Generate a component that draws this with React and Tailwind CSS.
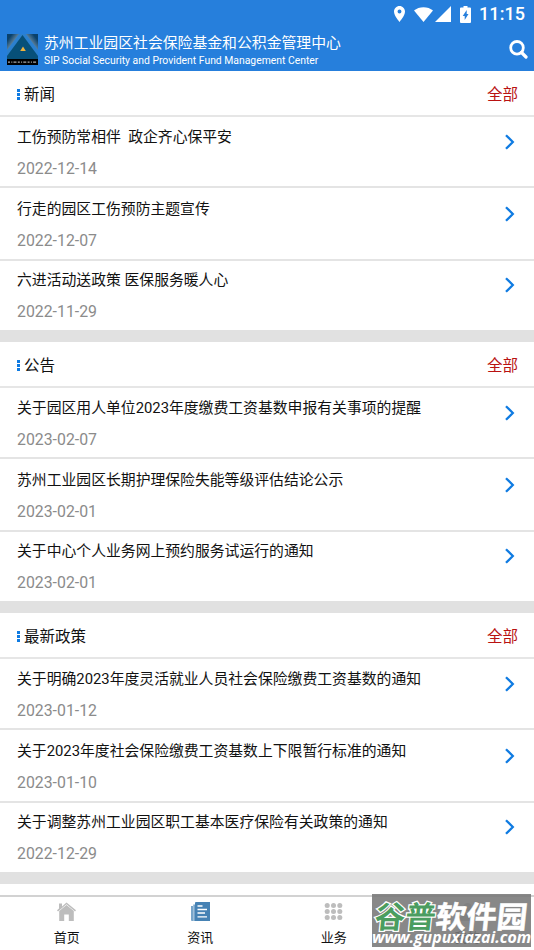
import clsx from 'clsx'

const SECTIONS = [
  {
    title: '新闻',
    items: [
      { title: '工伤预防常相伴  政企齐心保平安', date: '2022-12-14' },
      { title: '行走的园区工伤预防主题宣传', date: '2022-12-07' },
      { title: '六进活动送政策 医保服务暖人心', date: '2022-11-29' },
    ],
  },
  {
    title: '公告',
    items: [
      { title: '关于园区用人单位2023年度缴费工资基数申报有关事项的提醒', date: '2023-02-07' },
      { title: '苏州工业园区长期护理保险失能等级评估结论公示', date: '2023-02-01' },
      { title: '关于中心个人业务网上预约服务试运行的通知', date: '2023-02-01' },
    ],
  },
  {
    title: '最新政策',
    items: [
      { title: '关于明确2023年度灵活就业人员社会保险缴费工资基数的通知', date: '2023-01-12' },
      { title: '关于2023年度社会保险缴费工资基数上下限暂行标准的通知', date: '2023-01-10' },
      { title: '关于调整苏州工业园区职工基本医疗保险有关政策的通知', date: '2022-12-29' },
    ],
  },
]

const ROW_CLASSES = [
  'h-[71px] pt-[9px] border-b-2',
  'h-[73px] pt-[10px] border-b-2',
  'h-[69px] pt-[8px]',
]

const StatusBar = () => (
  <div className="flex h-7 items-center justify-end pr-[9px] text-white">
    <svg className="mr-[9px] h-4 w-[11px]" viewBox="5 2 14 20" fill="currentColor" preserveAspectRatio="none">
      <path d="M12 2C8.13 2 5 5.13 5 9c0 5.25 7 13 7 13s7-7.750 7-13c0-3.870-3.130-7-7-7zm0 9.500a2.500 2.500 0 1 1 0-5 2.500 2.500 0 0 1 0 5z" />
    </svg>
    <svg className="mr-0.5 h-[15px] w-[19px]" viewBox="0 0 19 15" fill="currentColor">
      <path d="M0 3.500C5 -1 14 -1 19 3.500L9.500 15z" />
    </svg>
    <svg className="mr-[9px] h-4 w-4" viewBox="0 0 16 16" fill="currentColor">
      <path d="M16 0v16H0z" />
    </svg>
    <svg className="mr-[8px] h-[17px] w-[11px]" viewBox="0 0 11 17">
      <path fill="currentColor" d="M3.500 0h4v1.500H10q1 0 1 1V16q0 1-1 1H1q-1 0-1-1V2.500q0-1 1-1h2.500z" />
      <path fill="#267fdc" d="M6.700 4L2.700 10h2v4L8.500 8H6.700z" />
    </svg>
    <span className="-mr-[1px] w-[47px] font-['Roboto',sans-serif] text-[18px] leading-none font-medium tracking-[0.1px]">11:15</span>
  </div>
)

const Logo = () => (
  <svg className="h-[31px] w-[31px] shrink-0" viewBox="0 0 31 31">
    <defs>
      <linearGradient id="edge" x1="0" y1="0" x2="0.6" y2="0.6">
        <stop offset="0.35" stopColor="#0a416b" />
        <stop offset="0.95" stopColor="#6b8ba2" />
      </linearGradient>
      <linearGradient id="edgeRight" x1="1" y1="0" x2="0.4" y2="0.6">
        <stop offset="0.35" stopColor="#0a416b" />
        <stop offset="0.95" stopColor="#6b8ba2" />
      </linearGradient>
    </defs>
    <path fill="#2b80cf" d="M0 0h31v26H0z" />
    <path fill="url(#edge)" d="M0 0h12L0 16z" />
    <path fill="url(#edgeRight)" d="M19 0h12v16z" />
    <path fill="#075079" d="M15.500 1L31 22v3H0v-3z" />
    <path fill="#f0b33d" d="M16 12.500L18.800 17H13.200z" />
    <path fill="#000" d="M0 25h31v6H0z" />
    <path stroke="#a9a9a9" strokeWidth="1.300" strokeDasharray="2 1.300 1 1.200 3 1.300" d="M1 28.200h29" />
  </svg>
)

const Header = () => (
  <header className="h-[71px] bg-[#267fdc] text-white">
    <StatusBar />
    <div className="flex h-[43px] pl-[7px]">
      <div className="pt-[6px]">
        <Logo />
      </div>
      <div className="ml-1.5 flex-1 pt-1 whitespace-nowrap">
        <h1 className="text-[14.85px] leading-[22px] font-normal">苏州工业园区社会保险基金和公积金管理中心</h1>
        <p className="mt-px text-[10.380px] leading-3">SIP Social Security and Provident Fund Management Center</p>
      </div>
      <svg className="mt-[12px] mr-[6px] h-[19px] w-[19px]" viewBox="0 0 19 19" fill="none" stroke="currentColor" strokeWidth="2.800">
        <circle cx="8" cy="7.800" r="6.300" />
        <path strokeWidth="3.200" strokeLinecap="round" d="M12.500 12.500L17 17" />
      </svg>
    </div>
  </header>
)

const NewsRow = ({ item, className }) => (
  <li className={clsx('flex border-[#e4e4e4] pl-[17px]', className)}>
    <div className="flex-1 whitespace-pre">
      <h3 className="text-[14.840px] leading-[22px] font-normal text-[#111]">{item.title}</h3>
      <p className="mt-[10px] text-[15.850px] leading-[22px] text-[#8b8b8b]">{item.date}</p>
    </div>
    <svg className="mt-[8px] mr-[19px] h-4 w-[10px]" viewBox="0 0 10 16" fill="none" stroke="#0f7be2" strokeWidth="2.300">
      <path d="M1 1.200L7.800 8 1 14.800" />
    </svg>
  </li>
)

const Section = ({ section }) => (
  <section className="border-b-12 border-[#e1e1e1] bg-white">
    <div className="flex h-[46px] items-center border-b-2 border-[#e6e6e6] pt-[3px] pr-4 pl-[17px] text-[15.500px] leading-[22px]">
      <span className="mr-1 flex flex-col gap-px">
        <i className="h-[3px] w-[3px] bg-[#0f7be2]" />
        <i className="h-[3px] w-[3px] bg-[#0f7be2]" />
        <i className="h-[3px] w-[3px] bg-[#0f7be2]" />
      </span>
      <h2 className="flex-1 font-normal text-[#111]">{section.title}</h2>
      <a className="text-[#b91212]">全部</a>
    </div>
    <ul>
      {section.items.map((item, i) => (
        <NewsRow key={item.title} item={item} className={ROW_CLASSES[i]} />
      ))}
    </ul>
  </section>
)

const HomeIcon = () => (
  <svg className="h-[19px] w-[19px]" viewBox="0 0 19 19" fill="#bdbdbd">
    <path d="M2 1.500h3v3l4.500-4L19 8.300l-1 1.200-8.500-7.200L1 9.500 0 8.300l2-1.700z" />
    <path d="M9.500 2.900L16.800 9V19h-5v-6.500H7.200V19H2.200V9z" />
  </svg>
)

const NewsIcon = () => (
  <svg className="h-[19px] w-[19px]" viewBox="0 0 19 19">
    <path fill="#4682b4" d="M4.500 0H19v19H4V1z" />
    <path fill="#78a5ca" d="M0 4h2v15H1q-1 0-1-1zM2.300 2.500H4V19H2.300z" />
    <path stroke="#fff" strokeWidth="1.300" d="M6.500 4h5M6.500 7.500H16M6.500 11h7.500M6.500 14.800H16" />
  </svg>
)

const GridIcon = () => (
  <svg className="h-[19px] w-[19px]" viewBox="0 0 19 19" fill="#bdbdbd">
    {[3.5, 9.5, 15.5].map((y) =>
      [3.2, 9.5, 15.8].map((x) => <circle key={`${x}-${y}`} cx={x} cy={y} r="2.500" />)
    )}
  </svg>
)

const UserIcon = () => (
  <svg className="h-[19px] w-[19px]" viewBox="0 0 19 19" fill="#bdbdbd">
    <circle cx="9.500" cy="5" r="4" />
    <path d="M1.500 19q0-8 8-8t8 8z" />
  </svg>
)

const TABS = [
  { label: '首页', Icon: HomeIcon },
  { label: '资讯', Icon: NewsIcon },
  { label: '业务', Icon: GridIcon },
  { label: '我的', Icon: UserIcon },
]

const TabBar = () => (
  <nav className="mt-[11px] grid h-[55px] grid-cols-4 border-t-2 border-[#d2d2d2] bg-white">
    {TABS.map(({ label, Icon }) => (
      <a key={label} className="flex flex-col items-center pt-[5px]">
        <Icon />
        <span className="mt-[8px] text-[13px] leading-[18px] text-[#111]">{label}</span>
      </a>
    ))}
  </nav>
)

const Watermark = () => (
  <div className="absolute top-[894px] left-[372px] h-[53px] w-[159px] bg-[#777777]/88 whitespace-nowrap">
    <div className="mt-[5px] ml-[3px] flex h-[32px] -skew-x-6 items-center font-['Noto_Sans_CJK_SC',sans-serif] text-[30.500px] leading-[32px] font-bold">
      <span className="text-[#4b9d60] [-webkit-text-stroke:2.500px_#fff] [paint-order:stroke_fill]">谷普</span>
      <span className="text-white [-webkit-text-stroke:0.500px_#fff]">软件园</span>
    </div>
    <div className="-mt-[3px] flex justify-center font-['Open_Sans',sans-serif] text-[15.900px] leading-[18px] font-bold text-white italic">
      www.gupuxiazai.com
    </div>
  </div>
)

export default function App() {
  return (
    <div className="relative h-[950px] w-[534px] overflow-hidden bg-white font-['Roboto','Noto_Sans_CJK_SC',sans-serif]">
      <Header />
      <main>
        {SECTIONS.map((section) => (
          <Section key={section.title} section={section} />
        ))}
      </main>
      <TabBar />
      <Watermark />
    </div>
  )
}
